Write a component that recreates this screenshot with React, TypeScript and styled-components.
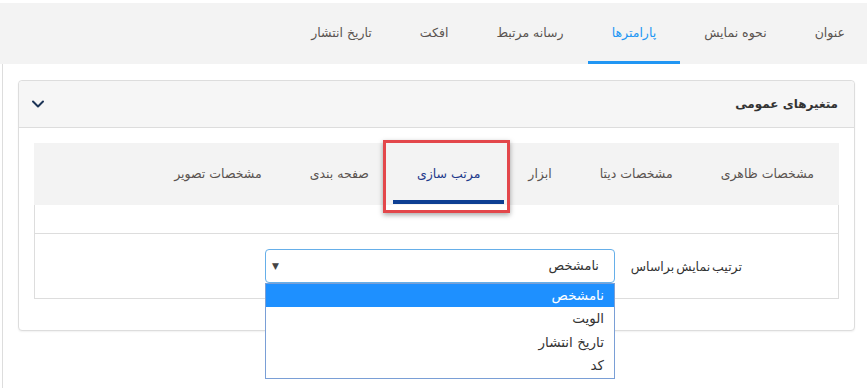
import React, { useState } from 'react';
import styled, { createGlobalStyle } from 'styled-components';
import { ChevronDown } from 'lucide-react';

const GlobalStyle = createGlobalStyle`
  html, body {
    margin: 0;
    padding: 0;
    background: #fff;
  }
  body {
    font-family: "DejaVu Sans", "Noto Sans", sans-serif;
    font-size: 13px;
    color: #333;
  }
  * {
    box-sizing: border-box;
  }
`;

const Page = styled.div`
  direction: rtl;
  padding-top: 3px;
  width: 867px;
`;

const TopTabs = styled.div`
  display: flex;
  height: 61px;
  background: #f3f3f3;
  margin-right: -2px;
`;

const TopTab = styled.div<{ $active?: boolean }>`
  position: relative;
  display: flex;
  align-items: center;
  padding: 0 24px 2px;
  color: ${p => (p.$active ? '#2196f3' : '#5a5350')};
  font-size: 12.5px;
  cursor: pointer;

  &::after {
    content: '';
    position: absolute;
    left: 0;
    right: 0;
    bottom: 0;
    height: 3px;
    background: ${p => (p.$active ? '#2196f3' : 'transparent')};
  }
`;

const Content = styled.div`
  border-left: 1px solid #ddd;
  margin-left: 2px;
  padding: 16px 12px 60px 15px;
`;

const Card = styled.div`
  border: 1px solid #ddd;
  border-radius: 4px;
  background: #fff;
  box-shadow: 0 1px 2px rgba(0, 0, 0, 0.06);
`;

const CardHeader = styled.div`
  display: flex;
  align-items: center;
  justify-content: space-between;
  height: 47px;
  padding: 0 16px 0 9px;
  background: #f6f6f6;
  border-bottom: 1px solid #ddd;
  border-radius: 4px 4px 0 0;
`;

const CardTitle = styled.h3`
  margin: 0;
  font-size: 12px;
  font-weight: 700;
  color: #333;
`;

const Chevron = styled(ChevronDown)`
  color: #1d3557;
`;

const CardBody = styled.div`
  padding: 15px 15px 31px;
`;

const InnerTabs = styled.div`
  display: flex;
  height: 62px;
  background: #f3f3f3;
`;

const InnerTab = styled.div<{ $active?: boolean }>`
  position: relative;
  display: flex;
  align-items: center;
  padding: 0 24px 2px;
  font-size: 12.5px;
  color: ${p => (p.$active ? '#1f3b8c' : '#5a5350')};
  cursor: pointer;

  &:first-child {
    padding-right: 25px;
  }

  &::after {
    content: '';
    position: absolute;
    left: 0;
    right: 0;
    bottom: 1px;
    height: 4px;
    background: ${p => (p.$active ? '#0d3f93' : 'transparent')};
  }
`;

const Highlight = styled.div`
  position: absolute;
  top: -3px;
  bottom: -8px;
  left: -10px;
  right: -6px;
  border: 3px solid #e3474b;
  box-shadow: 0 2px 5px rgba(0, 0, 0, 0.35);
  pointer-events: none;
`;

const TabPane = styled.div`
  border: 1px solid #ddd;
  border-top: none;
  padding-top: 28px;
`;

const FormRow = styled.div`
  display: grid;
  grid-template-columns: 223px 350px;
  align-items: center;
  height: 65px;
  border-top: 1px solid #ddd;
`;

const Label = styled.div`
  padding-right: 96px;
  font-size: 12.5px;
  word-spacing: -2px;
  color: #333;
  white-space: nowrap;
`;

const SelectWrap = styled.div`
  position: relative;
  margin-bottom: 1px;
`;

const SelectBox = styled.div`
  display: flex;
  align-items: center;
  justify-content: space-between;
  height: 34px;
  padding: 0 15px 0 6px;
  border: 1px solid #66afe9;
  border-radius: 4px;
  background: #fff;
  font-size: 13px;
  color: #333;
`;

const Arrow = styled.span`
  font-size: 9px;
  color: #444;
`;

const OptionList = styled.ul`
  position: absolute;
  top: 100%;
  left: 0;
  right: 0;
  margin: 0;
  padding: 0;
  list-style: none;
  background: #fff;
  border: 1px solid #7a9fd6;
  z-index: 5;
`;

const Option = styled.li<{ $selected?: boolean }>`
  height: 23.5px;
  line-height: 23.5px;
  padding-right: 10px;
  font-size: 13.5px;
  color: ${p => (p.$selected ? '#fff' : '#333')};
  background: ${p => (p.$selected ? '#1e90ff' : '#fff')};
`;

const topTabs = ['عنوان', 'نحوه نمایش', 'پارامترها', 'رسانه مرتبط', 'افکت', 'تاریخ انتشار'];
const innerTabs = ['مشخصات ظاهری', 'مشخصات دیتا', 'ابزار', 'مرتب سازی', 'صفحه بندی', 'مشخصات تصویر'];
const sortOptions = ['نامشخص', 'الویت', 'تاریخ انتشار', 'کد'];

export default function App() {
  const [topTab, setTopTab] = useState(2);
  const [innerTab, setInnerTab] = useState(3);
  const [sortBy, setSortBy] = useState(0);

  return (
    <>
      <GlobalStyle />
      <Page>
        <TopTabs>
          {topTabs.map((t, i) => (
            <TopTab key={t} $active={i === topTab} onClick={() => setTopTab(i)}>
              {t}
            </TopTab>
          ))}
        </TopTabs>
        <Content>
          <Card>
            <CardHeader>
              <CardTitle>متغیرهای عمومی</CardTitle>
              <Chevron size={20} strokeWidth={2.4} />
            </CardHeader>
            <CardBody>
              <InnerTabs>
                {innerTabs.map((t, i) => (
                  <InnerTab key={t} $active={i === innerTab} onClick={() => setInnerTab(i)}>
                    {t}
                    {i === innerTab && <Highlight />}
                  </InnerTab>
                ))}
              </InnerTabs>
              <TabPane>
                <FormRow>
                  <Label>ترتیب نمایش براساس</Label>
                  <SelectWrap>
                    <SelectBox>
                      <span>{sortOptions[sortBy]}</span>
                      <Arrow>▼</Arrow>
                    </SelectBox>
                    <OptionList>
                      {sortOptions.map((o, i) => (
                        <Option key={o} $selected={i === sortBy} onClick={() => setSortBy(i)}>
                          {o}
                        </Option>
                      ))}
                    </OptionList>
                  </SelectWrap>
                </FormRow>
              </TabPane>
            </CardBody>
          </Card>
        </Content>
      </Page>
    </>
  );
}
